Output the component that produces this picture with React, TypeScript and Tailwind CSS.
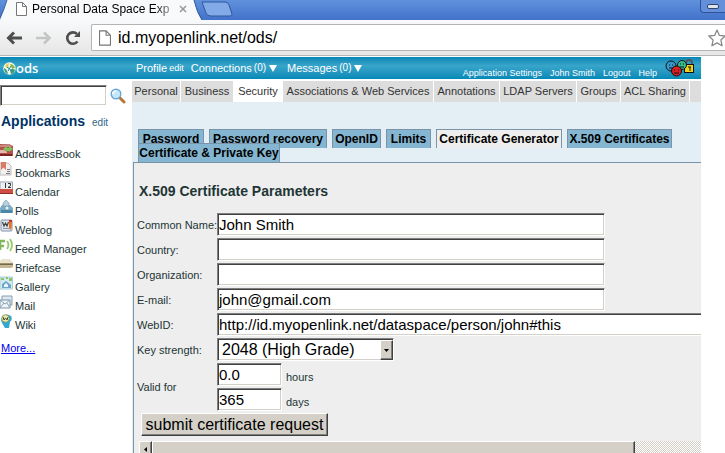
import type { ReactNode } from "react"
import { clsx } from "clsx"

const navTabs = [
  { label: "Personal", width: "w-[48px]" },
  { label: "Business", width: "w-[52px]" },
  { label: "Security", width: "w-[48px]", active: true },
  { label: "Associations & Web Services", width: "w-[150px]" },
  { label: "Annotations", width: "w-[65px]" },
  { label: "LDAP Servers", width: "w-[76px]" },
  { label: "Groups", width: "w-[43px]" },
  { label: "ACL Sharing", width: "w-[68px]" }
]

const securityTabs = [
  { label: "Password", width: "w-[66px]" },
  { label: "Password recovery", width: "w-[118px]" },
  { label: "OpenID", width: "w-[49px]" },
  { label: "Limits", width: "w-[45px]" },
  { label: "Certificate Generator", width: "w-[126px]", active: true },
  { label: "X.509 Certificates", width: "w-[105px]" },
  { label: "Certificate & Private Key", width: "w-[142px]" }
]

const fields = [
  { id: "cn", label: "Common Name:", value: "John Smith" },
  { id: "country", label: "Country:", value: "" },
  { id: "org", label: "Organization:", value: "" },
  { id: "email", label: "E-mail:", value: "john@gmail.com" },
  { id: "webid", label: "WebID:", value: "http://id.myopenlink.net/dataspace/person/john#this", wide: true }
]

const applications: { name: string; icon: ReactNode }[] = [
  {
    name: "AddressBook",
    icon: (
      <>
        <path d="M0 1h9l4 2v10H0z" fill="#b5524c" />
        <path d="M0 2l9-1 3 3H0z" fill="#c98a84" />
        <path d="M3 6l4-3v2h2V3l4 3-4 3V8H7v1z" fill="#7cc45c" />
        <path d="M0 11h12v2H0z" fill="#7c2522" />
        <path d="M0 7h4l3 2v1H0z" fill="#e3b9b2" />
      </>
    )
  },
  {
    name: "Bookmarks",
    icon: (
      <>
        <path d="M0 1h8l3 3v9H0z" fill="#f3f1f0" stroke="#bbb" />
        <path d="M1 0h5v8L3.500 5.500 1 8z" fill="#dc7a66" />
        <path d="M7 7h3v1H7zM7 9h3v1H7zM6 11h4v1H6z" fill="#777" />
      </>
    )
  },
  {
    name: "Calendar",
    icon: (
      <>
        <path d="M0 1h12.500v11H0z" fill="#eceef1" stroke="#9ba3ad" />
        <path d="M0 8h13v4H0z" fill="#cf4f47" />
        <path d="M0 12h13v1H0z" fill="#8e2f2b" />
        <path d="M5.500 2v5M8 2.500h2.500v2L8 6.500h3" fill="none" stroke="#333" />
      </>
    )
  },
  {
    name: "Polls",
    icon: (
      <>
        <path d="M0 8l2-3h8l3 3v5H0z" fill="#7cabc6" />
        <path d="M3 6V3l3-3 3 3v3z" fill="#b5d0df" stroke="#7696a9" strokeWidth=".6" />
        <path d="M1 10h11v3H1z" fill="#4c87a8" />
        <circle cx="7" cy="8" r="1.500" fill="#e6f2f8" />
      </>
    )
  },
  {
    name: "Weblog",
    icon: (
      <>
        <rect x="1" y="1" width="11" height="11" rx="1" fill="#dfe5ed" stroke="#8193a8" />
        <path d="M2.500 3l1.500 4L5.500 4 7 7l1.500-4" fill="none" stroke="#444" strokeWidth="1.200" />
        <path d="M3 9.500h6" stroke="#8795a4" />
        <path d="M9 2h3l-.5 7-1.500 2-1-2z" fill="#e87325" />
        <path d="M9 1h3v2H9z" fill="#c9352b" />
      </>
    )
  },
  {
    name: "Feed Manager",
    icon: (
      <>
        <path d="M0 3h5M0 12V3M0 8h4" fill="none" stroke="#7fb856" strokeWidth="2.600" />
        <path d="M7 3q3 4 0 8M10 1q4 6 0 12" fill="none" stroke="#94ca6c" strokeWidth="1.800" />
      </>
    )
  },
  {
    name: "Briefcase",
    icon: (
      <>
        <path d="M0 4l3-2h6l4 4v4l-2 1H0z" fill="#c6b794" />
        <path d="M0 4l3-2h6l4 4H0z" fill="#ebe2cd" />
        <path d="M0 6.500h13v1.500H0z" fill="#756a50" />
      </>
    )
  },
  {
    name: "Gallery",
    icon: (
      <>
        <path d="M0 1h12.500v12H0z" fill="#d4eaf3" stroke="#a7cfe0" />
        <path d="M1 2h3v2H1zM6 1h2v2H6zM9 2h3v3H9z" fill="#8dc36b" />
        <path d="M2 12V8l4-3 5 4v3z" fill="#6aa7ca" />
        <path d="M4 11V9l2-2 2 2v2z" fill="#f0f8fb" />
      </>
    )
  },
  {
    name: "Mail",
    icon: (
      <>
        <path d="M2 1h10v9H2z" fill="#dbe8f0" stroke="#8a9eae" />
        <path d="M0 5h10v8H0z" fill="#eff6fa" stroke="#7d94a6" />
        <path d="M0 5l5 4 5-4M0 13l4-5M10 13L7 8" fill="none" stroke="#8da3b3" />
      </>
    )
  },
  {
    name: "Wiki",
    icon: (
      <>
        <path d="M2 9q-2-4 1-7 4-3 8 0 2 3-1 6l-1 6H5z" fill="#32a8d1" />
        <circle cx="5.500" cy="4.500" r="3.800" fill="#e9e5a5" stroke="#79955a" strokeWidth=".8" />
        <path d="M3 3l1 3 1.500-2L7 6l1-3" fill="none" stroke="#36552e" />
      </>
    )
  }
]

const sunken =
  "rounded-none border border-t-[#808080] border-l-[#808080] border-r-white border-b-white bg-white shadow-[inset_1px_1px_#404040,inset_-1px_-1px_#d4d0c8] outline-none"
const raised =
  "border border-t-white border-l-white border-r-[#404040] border-b-[#404040] bg-[#d4d0c8] shadow-[inset_-1px_-1px_#808080]"

function PageIcon({ className }: { className: string }) {
  return (
    <svg viewBox="0 0 11 14" className={className} fill="#fff" stroke="#777">
      <path d="M.5.500h6l4 4v9H.5zM6.500.500v4h4" />
    </svg>
  )
}

function BrowserChrome() {
  return (
    <header>
      <div className="relative flex h-5 items-center bg-linear-to-b from-[#6191dc] to-[#4272ca] pl-4">
        <svg className="absolute top-0 left-0 h-5 w-[240px]" viewBox="0 0 240 20">
          <path d="M0 20Q4 10 7 0H194Q197 13 202 20z" fill="#f8f9fa" />
          <path d="M194 0Q197 13 202 20" fill="none" stroke="#315698" />
          <path d="M7 0Q4 10 0 18" fill="none" stroke="#40669f" />
          <path d="M202 2H225Q228 2 229 5L232 14Q232 16 230 16H211Q207 16 206 13z" fill="#82aae6" stroke="#31599e" />
        </svg>
        <PageIcon className="relative mb-0.5 h-3.5 w-[11px]" />
        <span className="relative mb-0.5 ml-[5px] w-[144px] overflow-hidden bg-linear-to-r from-black from-85% to-black/20 bg-clip-text text-[12px] leading-4 whitespace-nowrap text-transparent">
          Personal Data Space Exp
        </span>
        <button aria-label="Close tab" className="relative mb-0.5 ml-[3px]">
          <svg viewBox="0 0 8 8" className="size-2" stroke="#999" strokeWidth="1.500">
            <path d="M1 1l6 6M7 1L1 7" />
          </svg>
        </button>
        <button aria-label="Minimize" className="absolute top-0 right-0 h-[13px] w-[25px] rounded-bl border border-t-0 border-r-0 border-[#2f529a] bg-[#648fda] pl-[6px]">
          <span className="block h-[5px] w-[12px] rounded-xs border border-[#30466f] bg-[#dfe5ef]" />
        </button>
      </div>
      <div className="flex h-9 items-center border-b border-[#b5b5b5] bg-linear-to-b from-[#f8f9fa] to-[#e6e6e6] pl-[6px]">
        <button aria-label="Back">
          <svg viewBox="0 0 17 14" className="h-3.5 w-[17px]" fill="none" stroke="#4e4e4e" strokeWidth="3">
            <path d="M2 7H16M8 1.500L2.500 7L8 12.500" />
          </svg>
        </button>
        <button aria-label="Forward" className="ml-[13px]">
          <svg viewBox="0 0 17 14" className="h-3.5 w-[17px]" fill="none" stroke="#c4c4c4" strokeWidth="2.500">
            <path d="M0 7H14M8 1.500L13.500 7L8 12.500" />
          </svg>
        </button>
        <button aria-label="Reload" className="ml-3">
          <svg viewBox="0 0 16 16" className="size-4" fill="none" stroke="#4e4e4e" strokeWidth="2.600">
            <path d="M12.500 11.500A5.700 5.700 0 1 1 12 4" />
            <path d="M15 1v6H9z" fill="#4e4e4e" stroke="none" />
          </svg>
        </button>
        <div className="ml-[10px] flex h-[27px] flex-1 items-center rounded-l-xs border border-r-0 border-[#b4b4b4] bg-white pl-[7px]">
          <PageIcon className="h-4 w-3 shrink-0" />
          <input
            aria-label="Address"
            defaultValue="id.myopenlink.net/ods/"
            className="ml-[7px] min-w-0 flex-1 bg-transparent text-[16px] leading-5 outline-none"
          />
          <button aria-label="Bookmark this page" className="-mr-px shrink-0">
            <svg viewBox="0 0 18 18" className="size-[18px]" fill="#fff" stroke="#888" strokeWidth="1.300">
              <path d="M9 1l2.400 5.400 5.800.600-4.300 3.900 1.200 5.900L9 13.900l-5.100 2.900 1.200-5.900L.8 7l5.800-.600z" strokeLinejoin="round" />
            </svg>
          </button>
        </div>
      </div>
    </header>
  )
}

function OdsHeader() {
  return (
    <div className="mt-px mr-6 flex h-[22px] items-center bg-linear-to-b from-[#0087b5] via-[#38a5ca] via-40% to-[#0089b7] text-white">
      <div className="flex w-[136px] shrink-0 items-center pl-[3px]">
        <svg viewBox="0 0 13 13" className="size-[13px]">
          <circle cx="6.500" cy="6.500" r="6.200" fill="#f4f8ee" />
          <path d="M2 4q2-3 4-3-1 3 0 4L4 6z" fill="#e0cf4c" />
          <path d="M7 2q4 0 5 4L9 7z" fill="#8eb84a" />
          <path d="M1 6q3 1 4 6-4-1-4-6M7 8q3-2 5 0-1 4-4 4z" fill="#3a9a7c" />
          <path d="M4 5l5 4M8 4L5 9" stroke="#1a8f9d" />
        </svg>
        <span className="font-['Open_Sans',sans-serif] text-[13px] leading-4 font-semibold">ods</span>
      </div>
      <nav className="flex shrink-0 items-center text-[11px] leading-4">
        <a href="#">Profile</a>
        <a href="#" className="ml-[2px] text-[9px]">edit</a>
        <a href="#" className="ml-[7px] flex items-center">
          Connections <span className="ml-[2px] text-[10px]">(0)</span> <Caret />
        </a>
        <a href="#" className="ml-[10px] flex items-center">
          Messages <span className="ml-[2px] text-[10px]">(0)</span> <Caret />
        </a>
      </nav>
      <nav className="ml-auto flex shrink-0 gap-2 self-end text-[9px] leading-3">
        <a href="#">Application Settings</a>
        <a href="#">John Smith</a>
        <a href="#">Logout</a>
        <a href="#">Help</a>
      </nav>
      <svg viewBox="0 0 30 18" className="mr-[6px] ml-2 h-[18px] w-[30px] shrink-0" stroke="#111">
        <path d="M21 7V4q0-3 3-3t3 3v3" fill="none" stroke="#555" strokeWidth="1.800" />
        <rect x="19.500" y="5.500" width="9" height="8" fill="#f3d21c" />
        <path d="M25 8v4M23 8h3" />
        <circle cx="6" cy="7" r="5" fill="#3698d0" />
        <circle cx="17" cy="6" r="4.500" fill="#31bd91" />
        <circle cx="11.500" cy="12" r="5" fill="#d91e24" />
        <path d="M4 6h1M7 6h1M4 9h4M15 5h1M18 5h1M15 8h4M9 11h1M13 11h1M9 14h5" />
      </svg>
    </div>
  )
}

function Caret() {
  return (
    <svg viewBox="0 0 8 7" className="ml-[3px] h-[7px] w-2" fill="#fff">
      <path d="M0 0h8L4 7z" />
    </svg>
  )
}

function Sidebar() {
  return (
    <aside className="w-[132px] shrink-0 text-[11px] text-[#223535]">
      <div className="flex items-center pt-1">
        <input aria-label="Search" className={clsx("h-[21px] w-[107px]", sunken)} />
        <button aria-label="Search" className="ml-[3px]">
          <svg viewBox="0 0 16 16" className="size-4">
            <path d="M9 9l5 5" stroke="#b97535" strokeWidth="3" strokeLinecap="round" />
            <circle cx="6" cy="6" r="4.800" fill="#c5e7fb" stroke="#6ba5d6" strokeWidth="1.400" />
            <path d="M3 6q0-3 3-3" fill="none" stroke="#fff" strokeWidth="1.500" />
          </svg>
        </button>
      </div>
      <div className="mt-[7px] flex items-baseline gap-[7px] pl-px">
        <h2 className="text-[14px] leading-4 font-bold text-[#003366]">Applications</h2>
        <a href="#" className="text-[10px] text-[#336688]">edit</a>
      </div>
      <ul className="mt-[13px]">
        {applications.map((app) => (
          <li key={app.name} className="h-[19px]">
            <a href="#" className="flex items-start">
              <svg viewBox="0 0 13 14" className="h-3.5 w-[13px]">{app.icon}</svg>
              <span className="mt-[3px] ml-[2px] leading-4">{app.name}</span>
            </a>
          </li>
        ))}
      </ul>
      <a href="#" className="mt-[7px] ml-px inline-block leading-4 text-[#0000ee] underline">More...</a>
    </aside>
  )
}

function CertificateForm() {
  return (
    <form className="pl-[3px] text-[11px] leading-4 whitespace-nowrap text-[#223535]" onSubmit={(e) => e.preventDefault()}>
      <h1 className="pt-5 pb-[14px] pl-[2px] text-[14px] font-bold">X.509 Certificate Parameters</h1>
      <div className="grid grid-cols-[80px_1fr] items-center gap-y-[2px]">
        {fields.map((field) => (
          <div key={field.id} className="contents">
            <label htmlFor={field.id}>{field.label}</label>
            <input
              id={field.id}
              defaultValue={field.value}
              className={clsx("h-[23px] px-px text-[15px] text-black", sunken, field.wide ? "w-[520px]" : "w-[388px]")}
            />
          </div>
        ))}
        <label htmlFor="strength">Key strength:</label>
        <div className="relative w-[177px]">
          <select id="strength" className={clsx("block h-[23px] w-full appearance-none pl-1 text-[16px] text-black", sunken)}>
            <option>2048 (High Grade)</option>
          </select>
          <span className={clsx("pointer-events-none absolute top-[2px] right-[1px] flex h-[20px] w-[13px] items-center justify-center", raised)}>
            <svg viewBox="0 0 5 3" className="h-[3px] w-[5px]">
              <path d="M0 0h5L2.500 3z" />
            </svg>
          </span>
        </div>
        <span>Valid for</span>
        <div className="flex flex-col gap-[2px]">
          <label className="flex items-center gap-1">
            <input defaultValue="0.0" className={clsx("h-[23px] w-[65px] px-px text-[15px] text-black", sunken)} />
            <span className="pt-1">hours</span>
          </label>
          <label className="flex items-center gap-1">
            <input defaultValue="365" className={clsx("h-[23px] w-[65px] px-px text-[15px] text-black", sunken)} />
            <span className="pt-1">days</span>
          </label>
        </div>
      </div>
      <button className={clsx("mt-[2px] ml-1 block h-[23px] w-[187px] text-[16px] leading-5 text-black", raised)}>
        submit certificate request
      </button>
      <div className="mt-[5px] ml-[2px] flex h-4 bg-[repeating-conic-gradient(#d4d0c8_0%_25%,#fff_0%_50%)] bg-[length:2px_2px]">
        <button aria-label="Scroll left" className={clsx("flex w-[13px] shrink-0 items-center justify-center", raised)}>
          <svg viewBox="0 0 3 5" className="h-[5px] w-[3px]">
            <path d="M3 0v5L0 2.500z" />
          </svg>
        </button>
        <div className={clsx("w-[86%]", raised)} />
      </div>
    </form>
  )
}

export default function App() {
  return (
    <div className="flex h-screen flex-col overflow-hidden bg-white font-['Liberation_Sans',Arial,sans-serif] text-black">
      <BrowserChrome />
      <OdsHeader />
      <div className="mt-[2px] flex min-h-0 flex-1 pr-6">
        <Sidebar />
        <main className="flex min-w-0 flex-1 flex-col overflow-hidden bg-[#e4eef5]">
          <nav className="flex h-[21px] shrink-0 gap-px bg-white text-[11px] text-[#333]">
            {navTabs.map((tab) => (
              <a
                key={tab.label}
                href="#"
                className={clsx("flex shrink-0 items-center justify-center whitespace-nowrap", tab.width, !tab.active && "bg-[#dddddd]")}
              >
                {tab.label}
              </a>
            ))}
            <span className="flex-1 bg-[#dddddd]" />
          </nav>
          <nav className="flex shrink-0 flex-wrap gap-x-[5px] pt-[32px] pl-[6px] text-[12px] font-bold">
            {securityTabs.map((tab) => (
              <a
                key={tab.label}
                href="#"
                className={clsx(
                  "-mt-[5px] flex h-[19px] items-center justify-center border border-b-0 border-[#7b93a8] whitespace-nowrap",
                  tab.width,
                  tab.active ? "bg-[#eeeeee]" : "bg-[#84b6d1]"
                )}
              >
                {tab.label}
              </a>
            ))}
          </nav>
          <section className="ml-px min-h-0 flex-1 border-t border-l border-[#7b93a8] bg-[#eeeeee]">
            <CertificateForm />
          </section>
        </main>
      </div>
    </div>
  )
}
